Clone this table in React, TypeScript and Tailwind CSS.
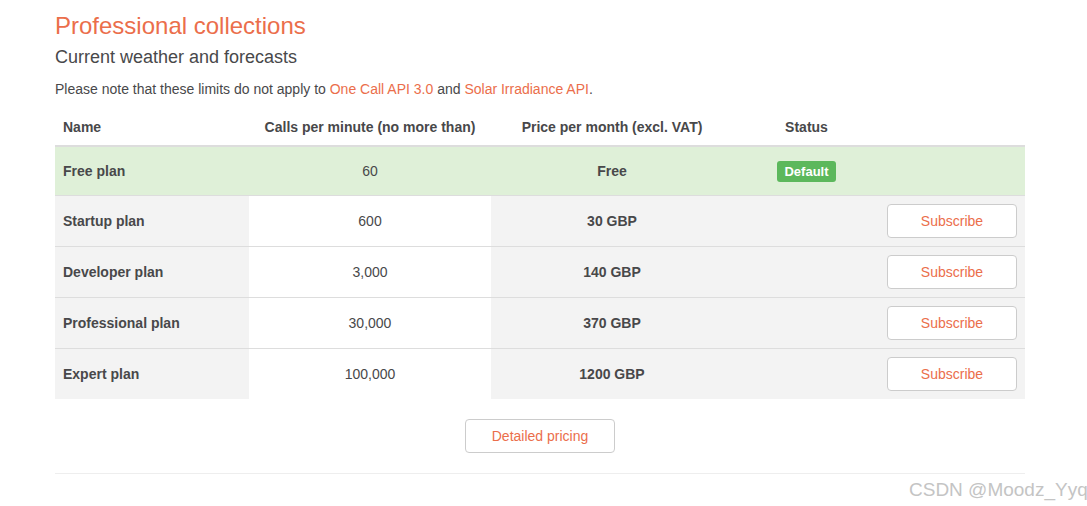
import React from 'react';

interface Plan {
  name: string;
  calls: string;
  price: string;
  free?: boolean;
}

const plans: Plan[] = [
  { name: 'Free plan', calls: '60', price: 'Free', free: true },
  { name: 'Startup plan', calls: '600', price: '30 GBP' },
  { name: 'Developer plan', calls: '3,000', price: '140 GBP' },
  { name: 'Professional plan', calls: '30,000', price: '370 GBP' },
  { name: 'Expert plan', calls: '100,000', price: '1200 GBP' },
];

const PlanRow: React.FC<{ plan: Plan }> = ({ plan }) => {
  if (plan.free) {
    return (
      <div className="flex h-[48px] bg-[#dff0d8] items-center">
        <div className="w-[194px] pl-2 font-bold">{plan.name}</div>
        <div className="w-[242px] text-center">{plan.calls}</div>
        <div className="w-[242px] text-center font-bold">{plan.price}</div>
        <div className="w-[147px] flex justify-center">
          <span className="bg-[#5cb85c] text-white font-bold text-[13px] leading-none rounded-[3px] h-[21px] px-[7px] flex items-center">
            Default
          </span>
        </div>
        <div className="flex-1" />
      </div>
    );
  }

  return (
    <div className="flex h-[51px] border-t border-[#dddddd]">
      <div className="w-[194px] pl-2 font-bold bg-[#f3f3f3] flex items-center">{plan.name}</div>
      <div className="w-[242px] text-center bg-white flex items-center justify-center">{plan.calls}</div>
      <div className="flex-1 flex items-center bg-[#f3f3f3]">
        <div className="w-[242px] text-center font-bold">{plan.price}</div>
        <div className="w-[147px]" />
        <div className="flex-1 flex justify-end pr-[8px]">
          <button className="w-[130px] h-[34px] bg-white border border-[#cccccc] rounded-[4px] text-[#eb6e4b] text-[14px]">
            Subscribe
          </button>
        </div>
      </div>
    </div>
  );
};

export default function App() {
  return (
    <div className="relative w-[1087px] h-[506px] bg-white overflow-hidden text-[#48484a] text-[14px] font-['Liberation_Sans',Arial,sans-serif]">
      <div className="ml-[55px] w-[970px] pt-[13px]">
        <h1 className="text-[24px] leading-[26px] text-[#eb6e4b]">Professional collections</h1>
        <h2 className="mt-[8px] text-[18px] leading-[20px] text-[#48484a]">Current weather and forecasts</h2>
        <p className="mt-[12px] leading-[20px]">
          Please note that these limits do not apply to{' '}
          <span className="text-[#eb6e4b]">One Call API 3.0</span> and{' '}
          <span className="text-[#eb6e4b]">Solar Irradiance API</span>.
        </p>

        <div className="mt-[10px]">
          <div className="flex h-[38px] items-center font-bold border-b-2 border-[#dddddd]">
            <div className="w-[194px] pl-2">Name</div>
            <div className="w-[242px] text-center">Calls per minute (no more than)</div>
            <div className="w-[242px] text-center">Price per month (excl. VAT)</div>
            <div className="w-[147px] text-center">Status</div>
            <div className="flex-1" />
          </div>
          {plans.map((p) => (
            <PlanRow key={p.name} plan={p} />
          ))}
        </div>

        <div className="flex justify-center mt-[20px]">
          <button className="w-[150px] h-[34px] bg-white border border-[#cccccc] rounded-[4px] text-[#eb6e4b] text-[14px]">
            Detailed pricing
          </button>
        </div>

        <div className="mt-[20px] border-t border-[#eeeeee]" />
      </div>

      <div className="absolute left-[909px] top-[479px] text-[19px] leading-[22px] text-[#c4c4c4] whitespace-nowrap">
        CSDN @Moodz_Yyq
      </div>
    </div>
  );
}
